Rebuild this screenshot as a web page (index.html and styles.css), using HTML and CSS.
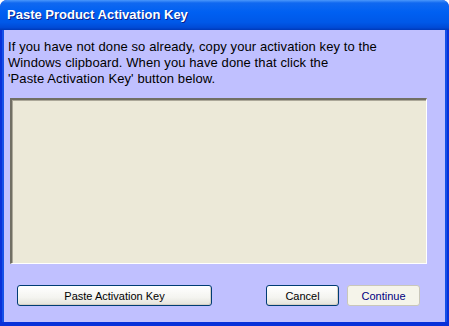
FILE: index.html
```html
<!DOCTYPE html>
<html>
<head>
    <meta charset="utf-8">
    <link rel="stylesheet" href="styles.css">
</head>
<body>
    <div class="window">
        <div class="titlebar">Paste Product Activation Key</div>
        <div class="content">
            <p class="intro">If you have not done so already, copy your activation key to the<br>Windows clipboard. When you have done that click the<br>'Paste Activation Key' button below.</p>
            <div class="keybox"></div>
            <div class="buttons">
                <button class="btn btn-paste">Paste Activation Key</button>
                <div class="spacer"></div>
                <button class="btn btn-cancel">Cancel</button>
                <button class="btn btn-continue" disabled>Continue</button>
            </div>
        </div>
    </div>
</body>
</html>
```

FILE: styles.css
```css
body {
    margin: 0;
    background: #ffffff;
    font-family: "Liberation Sans", Arial, sans-serif;
}

.window {
    width: 449px;
    height: 326px;
    box-sizing: border-box;
    display: flex;
    flex-direction: column;
    background: #0831d9;
    border-radius: 7px 7px 0 0;
    overflow: hidden;
}

.titlebar {
    height: 30px;
    flex: none;
    box-sizing: border-box;
    padding: 7px 0 0 7px;
    color: #ffffff;
    font-weight: bold;
    font-size: 13px;
    text-shadow: 1px 1px 0 #0a1f8a;
    background: linear-gradient(to bottom, #4a97fb 0%, #1068f0 10%, #0060f2 40%, #0058e8 75%, #004ad6 92%, #0038b8 100%);
}

.content {
    flex: 1;
    display: flex;
    flex-direction: column;
    margin: 0 4px 4px 4px;
    padding: 9px 0 0 4px;
    background: #c0c0ff;
    box-shadow: -2px 0 0 #1450e8, 2px 0 0 #1450e8;
}

.intro {
    margin: 0;
    font-size: 13px;
    letter-spacing: 0.1px;
    line-height: 16px;
    color: #000000;
}

.keybox {
    margin: 11px 18px 0 2px;
    height: 166px;
    box-sizing: border-box;
    background: #ece9d8;
    border-top: 2px solid #716f64;
    border-left: 2px solid #716f64;
    border-right: 1px solid #ffffff;
    border-bottom: 1px solid #ffffff;
    box-shadow: inset 1px 1px 0 #aca899;
}

.buttons {
    display: flex;
    margin: 21px 0 0 9px;
}

.spacer {
    flex: 1;
}

.btn {
    height: 21px;
    box-sizing: border-box;
    border: 1px solid #003c74;
    border-radius: 3px;
    background: linear-gradient(to bottom, #ffffff 0%, #f4f4f0 60%, #e3e2da 100%);
    font-family: "Liberation Sans", Arial, sans-serif;
    font-size: 11px;
    color: #000000;
    padding: 0;
    box-shadow: inset -1px -1px 0 #d6d0c5;
}

.btn-paste {
    width: 195px;
}

.btn-cancel {
    width: 73px;
    margin-right: 8px;
}

.btn-continue {
    width: 73px;
    margin-right: 25px;
    border-color: #c9c7ba;
    background: #f5f4ea;
    box-shadow: none;
    color: #000080;
}
```
